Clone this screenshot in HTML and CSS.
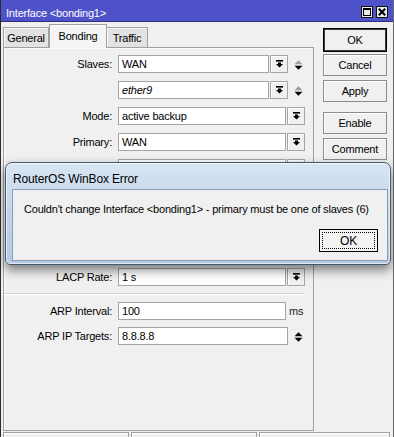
FILE: index.html
```html
<!DOCTYPE html>
<html>
<head>
<meta charset="utf-8">
<link rel="stylesheet" href="styles.css">
</head>
<body>
<div class="window">
  <div class="titlebar">
    <span class="title">Interface &lt;bonding1&gt;</span>
    <div class="tb-buttons">
      <span class="tb-btn"><svg width="8" height="8" viewBox="0 0 8 8"><rect x="0.5" y="0.5" width="7" height="7" fill="none" stroke="#000" stroke-width="1"/><rect x="0" y="0" width="8" height="2" fill="#000"/></svg></span>
      <span class="tb-btn"><svg width="8" height="8" viewBox="0 0 8 8"><path d="M0.8 0.8 L7.2 7.2 M7.2 0.8 L0.8 7.2" stroke="#000" stroke-width="2"/></svg></span>
    </div>
  </div>
  <div class="main">
    <div class="left">
      <div class="tabs">
        <div class="tab t-general">General</div>
        <div class="tab t-bonding active">Bonding</div>
        <div class="tab t-traffic">Traffic</div>
      </div>
      <div class="panel">
        <div class="row first">
          <div class="label">Slaves:</div>
          <div class="field">
            <div class="input">WAN</div>
            <div class="dd"><svg width="7" height="8" viewBox="0 0 7 8"><rect x="0" y="0" width="7" height="1.6" fill="#000"/><polygon points="2,2.6 5,2.6 5,4 7,4 3.5,7.6 0,4 2,4" fill="#000"/></svg></div>
            <div class="spin"><svg width="9" height="10" viewBox="0 0 9 10"><polygon points="0.5,4.3 8.5,4.3 4.5,0.3" fill="#9c9c9c"/><polygon points="0.5,5.7 8.5,5.7 4.5,9.7" fill="#000"/></svg></div>
          </div>
        </div>
        <div class="row">
          <div class="label"></div>
          <div class="field">
            <div class="input italic">ether9</div>
            <div class="dd"><svg width="7" height="8" viewBox="0 0 7 8"><rect x="0" y="0" width="7" height="1.6" fill="#000"/><polygon points="2,2.6 5,2.6 5,4 7,4 3.5,7.6 0,4 2,4" fill="#000"/></svg></div>
            <div class="spin"><svg width="9" height="10" viewBox="0 0 9 10"><polygon points="0.5,4.3 8.5,4.3 4.5,0.3" fill="#9c9c9c"/><polygon points="0.5,5.7 8.5,5.7 4.5,9.7" fill="#000"/></svg></div>
          </div>
        </div>
        <div class="row">
          <div class="label">Mode:</div>
          <div class="field">
            <div class="input">active backup</div>
            <div class="dd"><svg width="7" height="8" viewBox="0 0 7 8"><rect x="0" y="0" width="7" height="1.6" fill="#000"/><polygon points="2,2.6 5,2.6 5,4 7,4 3.5,7.6 0,4 2,4" fill="#000"/></svg></div>
          </div>
        </div>
        <div class="row">
          <div class="label">Primary:</div>
          <div class="field">
            <div class="input">WAN</div>
            <div class="dd"><svg width="7" height="8" viewBox="0 0 7 8"><rect x="0" y="0" width="7" height="1.6" fill="#000"/><polygon points="2,2.6 5,2.6 5,4 7,4 3.5,7.6 0,4 2,4" fill="#000"/></svg></div>
          </div>
        </div>
        <div class="row">
          <div class="label"></div>
          <div class="field">
            <div class="input"></div>
            <div class="dd"><svg width="7" height="8" viewBox="0 0 7 8"><rect x="0" y="0" width="7" height="1.6" fill="#000"/><polygon points="2,2.6 5,2.6 5,4 7,4 3.5,7.6 0,4 2,4" fill="#000"/></svg></div>
          </div>
        </div>
        <div class="row">
          <div class="label"></div>
          <div class="field">
            <div class="input"></div>
            <div class="dd"><svg width="7" height="8" viewBox="0 0 7 8"><rect x="0" y="0" width="7" height="1.6" fill="#000"/><polygon points="2,2.6 5,2.6 5,4 7,4 3.5,7.6 0,4 2,4" fill="#000"/></svg></div>
          </div>
        </div>
        <div class="row">
          <div class="label"></div>
          <div class="field">
            <div class="input"></div>
          </div>
        </div>
        <div class="row">
          <div class="label"></div>
          <div class="field">
            <div class="input"></div>
          </div>
        </div>
        <div class="row group-start">
          <div class="label">LACP Rate:</div>
          <div class="field">
            <div class="input">1 s</div>
            <div class="dd"><svg width="7" height="8" viewBox="0 0 7 8"><rect x="0" y="0" width="7" height="1.6" fill="#000"/><polygon points="2,2.6 5,2.6 5,4 7,4 3.5,7.6 0,4 2,4" fill="#000"/></svg></div>
          </div>
        </div>
        <div class="separator"></div>
        <div class="row after-sep">
          <div class="label">ARP Interval:</div>
          <div class="field">
            <div class="input">100</div>
            <div class="unit">ms</div>
          </div>
        </div>
        <div class="row tight">
          <div class="label">ARP IP Targets:</div>
          <div class="field">
            <div class="input">8.8.8.8</div>
            <div class="spin"><svg width="9" height="10" viewBox="0 0 9 10"><polygon points="0.5,4.3 8.5,4.3 4.5,0.3" fill="#000"/><polygon points="0.5,5.7 8.5,5.7 4.5,9.7" fill="#000"/></svg></div>
          </div>
        </div>
      </div>
    </div>
    <div class="buttons">
      <div class="btn default">OK</div>
      <div class="btn b-cancel">Cancel</div>
      <div class="btn b-apply">Apply</div>
      <div class="btn b-enable">Enable</div>
      <div class="btn b-comment">Comment</div>
    </div>
  </div>
  <div class="statusbar">
    <div class="seg s1"></div>
    <div class="seg s2"></div>
    <div class="seg s3"></div>
  </div>

  <div class="dialog">
    <div class="dlg-title">RouterOS WinBox Error</div>
    <div class="dlg-client">
      <div class="dlg-msg">Couldn't change Interface &lt;bonding1&gt; - primary must be one of slaves (6)</div>
      <div class="dlg-actions"><div class="dlg-ok"><span class="focus">OK</span></div></div>
    </div>
  </div>
</div>
</body>
</html>
```

FILE: styles.css
```css
* { box-sizing: border-box; }
html, body { margin: 0; padding: 0; }
body {
  width: 394px;
  height: 437px;
  overflow: hidden;
  background: #f0f0f0;
  font-family: "Liberation Sans", Arial, sans-serif;
  font-size: 11px;
  letter-spacing: -0.2px;
  color: #000;
}
.window {
  position: relative;
  width: 394px;
  height: 437px;
  border-left: 1px solid #2c2c2c;
  border-right: 1px solid #6a6a6a;
  background: #f0f0f0;
  display: flex;
  flex-direction: column;
}
.titlebar {
  height: 22px;
  flex: none;
  background: #4e52c9;
  border-bottom: 1px solid #2d2f78;
  display: flex;
  justify-content: space-between;
  align-items: flex-start;
  padding: 0 5px 0 5px;
}
.title {
  color: #fff;
  line-height: 13px;
  padding-top: 7px;
}
.tb-buttons { display: flex; gap: 3px; padding-top: 6px; }
.tb-btn {
  width: 12px;
  height: 12px;
  background: #eaeaea;
  border: 1px solid #111;
  display: flex;
  align-items: center;
  justify-content: center;
}
.main { flex: 1; display: flex; min-height: 0; }
.left {
  width: 313px;
  padding-left: 2px;
  display: flex;
  flex-direction: column;
}
.tabs {
  height: 25px;
  flex: none;
  display: flex;
  align-items: flex-end;
  position: relative;
  z-index: 1;
}
.tab {
  height: 20px;
  border: 1px solid #a0a0a0;
  border-bottom: none;
  background: #e2e2e2;
  box-shadow: inset 1px 1px 0 #fafafa;
  display: flex;
  align-items: center;
  justify-content: center;
}
.t-general { width: 46px; }
.t-bonding { width: 58px; }
.t-traffic { width: 41px; border-left: none; }
.tab.active {
  height: 24px;
  margin-bottom: -1px;
  background: #f4f4f4;
  padding-bottom: 2px;
}
.panel {
  flex: 1;
  border: 1px solid #a0a0a0;
  box-shadow: inset 1px 1px 0 #fbfbfb;
  background: #f0f0f0;
  padding: 7px 7px 0 0;
}
.row {
  display: flex;
  height: 18px;
  margin-top: 8px;
  align-items: center;
}
.row.first { margin-top: 0; }
.row.group-start { margin-top: 13px; }
.row.after-sep { margin-top: 7px; }
.row.tight { margin-top: 7px; }
.label {
  width: 108px;
  margin-right: 6px;
  text-align: right;
  white-space: nowrap;
  line-height: 16px;
  padding-bottom: 1px;
}
.field {
  width: 187px;
  height: 18px;
  display: flex;
  gap: 1px;
  align-items: center;
}
.input {
  flex: 1;
  height: 18px;
  background: #fff;
  border: 1px solid #a5a5a5;
  padding-left: 3px;
  line-height: 16px;
  white-space: nowrap;
  overflow: hidden;
}
.italic { font-style: italic; }
.dd {
  width: 18px;
  height: 18px;
  flex: none;
  border: 1px solid #a5a5a5;
  background: #f0f0f0;
  box-shadow: inset 1px 1px 0 #fff;
  display: flex;
  align-items: center;
  justify-content: center;
}
.spin {
  width: 14px;
  height: 18px;
  flex: none;
  margin-left: 2px;
  display: flex;
  align-items: center;
  justify-content: center;
  padding-top: 2px;
}
.unit {
  width: 16px;
  flex: none;
  margin-left: 2px;
  color: #222;
  line-height: 16px;
}
.separator {
  height: 2px;
  margin-top: 7px;
  margin-right: 1px;
  border-top: 1px solid #d2d2d2;
  border-bottom: 1px solid #fff;
}
.buttons {
  width: 64px;
  margin-left: 9px;
  padding-top: 6px;
  display: flex;
  flex-direction: column;
}
.btn {
  height: 22px;
  border: 1px solid #8c8c8c;
  background: #f0f0f0;
  box-shadow: inset 1px 1px 0 #fff;
  display: flex;
  align-items: center;
  justify-content: center;
}
.btn.default {
  height: 24px;
  border: 1px solid #000;
  box-shadow: inset 0 0 0 1px #3a3a3a;
}
.b-cancel { margin-top: 2px; }
.b-apply { margin-top: 4px; }
.b-enable { margin-top: 10px; }
.b-comment { margin-top: 4px; }
.statusbar {
  height: 5px;
  flex: none;
  margin-top: 1px;
  display: flex;
  gap: 2px;
  padding-left: 2px;
}
.seg {
  border-top: 1px solid #a0a0a0;
  border-left: 1px solid #a0a0a0;
  border-right: 1px solid #a0a0a0;
  box-shadow: inset 1px 1px 0 #fff;
}
.s1 { width: 126px; }
.s2 { width: 126px; }
.s3 { width: 131px; }

.dialog {
  position: absolute;
  left: 4px;
  top: 162px;
  width: 386px;
  height: 103px;
  z-index: 5;
  border: 1px solid #46566d;
  border-radius: 7px 7px 5px 5px;
  background: linear-gradient(180deg, #d8e5f3 0%, #c2d6eb 45%, #b3cbe5 100%);
  box-shadow: 0 5px 11px rgba(0,0,0,0.5), inset 0 0 0 1px rgba(255,255,255,0.6);
  padding: 0 2px 3px 6px;
  display: flex;
  flex-direction: column;
}
.dlg-title {
  height: 26px;
  flex: none;
  padding: 9px 0 0 1px;
  font-size: 12px;
  letter-spacing: -0.15px;
  line-height: 14px;
}
.dlg-client {
  height: 72px;
  border: 1px solid #8b9db2;
  background: #f0f0f0;
  padding: 12px 9px 0 11px;
}
.dlg-msg {
  line-height: 15px;
  white-space: nowrap;
}
.dlg-actions {
  margin-top: 12px;
  display: flex;
  justify-content: flex-end;
}
.dlg-ok {
  width: 59px;
  height: 23px;
  border: 1px solid #000;
  background: #f2f2f2;
  padding: 2px;
  display: flex;
}
.focus {
  flex: 1;
  border: 1px dotted #000;
  display: flex;
  align-items: center;
  justify-content: center;
  font-size: 12px;
}
```
